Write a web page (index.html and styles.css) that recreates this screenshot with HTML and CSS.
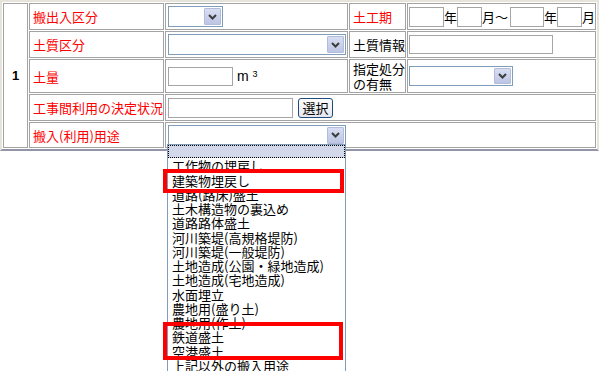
FILE: index.html
```html
<!DOCTYPE html>
<html lang="ja">
<head>
  <meta charset="UTF-8">
  <meta name="viewport" content="width=device-width, initial-scale=1.0">
  <title>搬出入情報</title>
  <link rel="stylesheet" href="styles.css">
</head>
<body>
  <div class="page">
    <!-- 入力フォーム -->
    <table class="form-table">
      <colgroup>
        <col class="col-no">
        <col class="col-label">
        <col class="col-value">
        <col class="col-sublabel">
        <col class="col-subvalue">
      </colgroup>
      <tr class="row-1">
        <td class="no" rowspan="5">1</td>
        <td class="label req">搬出入区分</td>
        <td class="value">
          <div class="field">
            <span class="select w-55"><span class="arrow"><svg width="9" height="6" viewBox="0 0 9 6"><polyline points="1,1 4.5,4.5 8,1" /></svg></span></span>
          </div>
        </td>
        <td class="label sub req">土工期</td>
        <td class="value sub">
          <div class="field period"><input class="in-year"><span>年</span><input class="in-month"><span>月</span><span>～</span><input class="in-year second"><span>年</span><input class="in-month"><span>月</span></div>
        </td>
      </tr>
      <tr class="row-2">
        <td class="label req">土質区分</td>
        <td class="value">
          <div class="field">
            <span class="select w-178"><span class="arrow"><svg width="9" height="6" viewBox="0 0 9 6"><polyline points="1,1 4.5,4.5 8,1" /></svg></span></span>
          </div>
        </td>
        <td class="label sub">土質情報</td>
        <td class="value sub">
          <div class="field"><input class="in-info"></div>
        </td>
      </tr>
      <tr class="row-3">
        <td class="label req">土量</td>
        <td class="value">
          <div class="field"><input class="in-volume"><span class="unit">m <span class="sup">3</span></span></div>
        </td>
        <td class="label sub two-line">指定処分<br>の有無</td>
        <td class="value sub">
          <div class="field">
            <span class="select w-104"><span class="arrow"><svg width="9" height="6" viewBox="0 0 9 6"><polyline points="1,1 4.5,4.5 8,1" /></svg></span></span>
          </div>
        </td>
      </tr>
      <tr class="row-4">
        <td class="label req">工事間利用の決定状況</td>
        <td class="value" colspan="3">
          <div class="field"><input class="in-decision"><button class="btn">選択</button></div>
        </td>
      </tr>
      <tr class="row-5">
        <td class="label req">搬入(利用)用途</td>
        <td class="value" colspan="3">
          <div class="field">
            <span class="select w-178"><span class="arrow"><svg width="9" height="6" viewBox="0 0 9 6"><polyline points="1,1 4.5,4.5 8,1" /></svg></span></span>
          </div>
        </td>
      </tr>
    </table>

    <!-- 開いたリスト -->
    <ul class="dropdown">
      <li class="focus"></li>
      <li>工作物の埋戻し</li>
      <li>建築物埋戻し</li>
      <li>道路(路床)盛土</li>
      <li>土木構造物の裏込め</li>
      <li>道路路体盛土</li>
      <li>河川築堤(高規格堤防)</li>
      <li>河川築堤(一般堤防)</li>
      <li>土地造成(公園・緑地造成)</li>
      <li>土地造成(宅地造成)</li>
      <li>水面埋立</li>
      <li>農地用(盛り土)</li>
      <li>農地用(作土)</li>
      <li>鉄道盛土</li>
      <li>空港盛土</li>
      <li>上記以外の搬入用途</li>
    </ul>

    <!-- 強調枠 -->
    <div class="mark mark-1"></div>
    <div class="mark mark-2"></div>
  </div>
</body>
</html>
```

FILE: styles.css
```css
* {
  box-sizing: border-box;
}
body {
  margin: 0;
  background: #fff;
  color: #000;
  font-family: "Noto Sans CJK JP", "Liberation Sans", sans-serif;
  font-size: 13px;
}
.page {
  position: relative;
  width: 601px;
  height: 371px;
  overflow: hidden;
}

/* テーブル */
.form-table {
  table-layout: fixed;
  width: 599px;
  border-collapse: separate;
  border-spacing: 1px;
  border-style: solid;
  border-width: 2px 2px 2px 2px;
  border-color: #e6e4da #e6e4da #9494a8 #e6e4da;
  background: #fff;
}
.col-no { width: 25px; }
.col-label { width: 135px; }
.col-value { width: 183px; }
.col-sublabel { width: 57px; }
.col-subvalue { width: 189px; }
.row-1 { height: 27px; }
.row-2 { height: 27px; }
.row-3 { height: 34px; }
.row-4 { height: 27px; }
.row-5 { height: 26px; }
.form-table td {
  border: 1px solid #a3a3a3;
  padding: 0;
  vertical-align: middle;
  white-space: nowrap;
}
.form-table td.no {
  text-align: center;
  font-family: "Liberation Sans", sans-serif;
  font-weight: bold;
  font-size: 13px;
}
.form-table td.label {
  padding-left: 3px;
  line-height: 15px;
}
.form-table td.req { color: #f00; }
.form-table td.value { padding-left: 2px; }
.form-table td.value.sub { padding-left: 1px; }
.two-line { line-height: 15px; }

.field {
  display: flex;
  align-items: center;
}

/* 入力欄 */
input {
  margin: 0;
  padding: 0;
  border: 1px solid #a5a5a5;
  background: #fff;
  font: inherit;
}
.in-year { width: 35px; height: 20px; }
.in-year.second { width: 34px; margin-left: 2px; }
.in-month { width: 25px; height: 20px; }
.in-info { width: 144px; height: 19px; }
.in-volume { width: 65px; height: 19px; }
.in-decision { width: 125px; height: 20px; }
.period span { line-height: 20px; }

.unit {
  margin-left: 4px;
  font-family: "Liberation Sans", sans-serif;
  font-size: 14px;
}
.sup {
  position: relative;
  top: -4px;
  font-size: 9px;
}

/* セレクト */
.select {
  position: relative;
  display: inline-block;
  height: 21px;
  border: 1px solid #7f9db9;
  background: #fff;
}
.w-55 { width: 55px; }
.w-104 { width: 104px; height: 20px; }
.w-178 { width: 178px; }
.arrow {
  position: absolute;
  top: 1px;
  right: 1px;
  bottom: 1px;
  width: 17px;
  display: flex;
  align-items: center;
  justify-content: center;
  background: linear-gradient(#d8def2, #bcc5e3);
  border: 1px solid #b3bddb;
  border-radius: 1px;
}
.arrow polyline {
  fill: none;
  stroke: #3c3c3c;
  stroke-width: 2;
}

.btn {
  margin: 0 0 0 5px;
  width: 35px;
  height: 20px;
  padding: 0;
  border: 1px solid #1c4b7c;
  border-radius: 3px;
  background: linear-gradient(#fdfdfd, #e6e7ee);
  font: inherit;
  color: #000;
  line-height: 16px;
}

/* ドロップダウン */
.dropdown {
  position: absolute;
  left: 167px;
  top: 144px;
  width: 179px;
  height: 227px;
  margin: 0;
  padding: 0;
  list-style: none;
  background: #fff;
  border: 1px solid #7f9db9;
  border-bottom: none;
  overflow: hidden;
}
.dropdown li {
  height: 14.25px;
  line-height: 14.25px;
  padding-left: 4px;
  white-space: nowrap;
}
.dropdown li.focus {
  background: #d3d8ea;
  outline: 1px dotted #000;
  outline-offset: -1px;
  height: 13px;
  margin-bottom: 1.25px;
}

/* 赤枠 */
.mark {
  position: absolute;
  border: 4px solid #f00;
}
.mark-1 {
  left: 163px;
  top: 169px;
  width: 181px;
  height: 24px;
}
.mark-2 {
  left: 163px;
  top: 322px;
  width: 180px;
  height: 38px;
}
```
